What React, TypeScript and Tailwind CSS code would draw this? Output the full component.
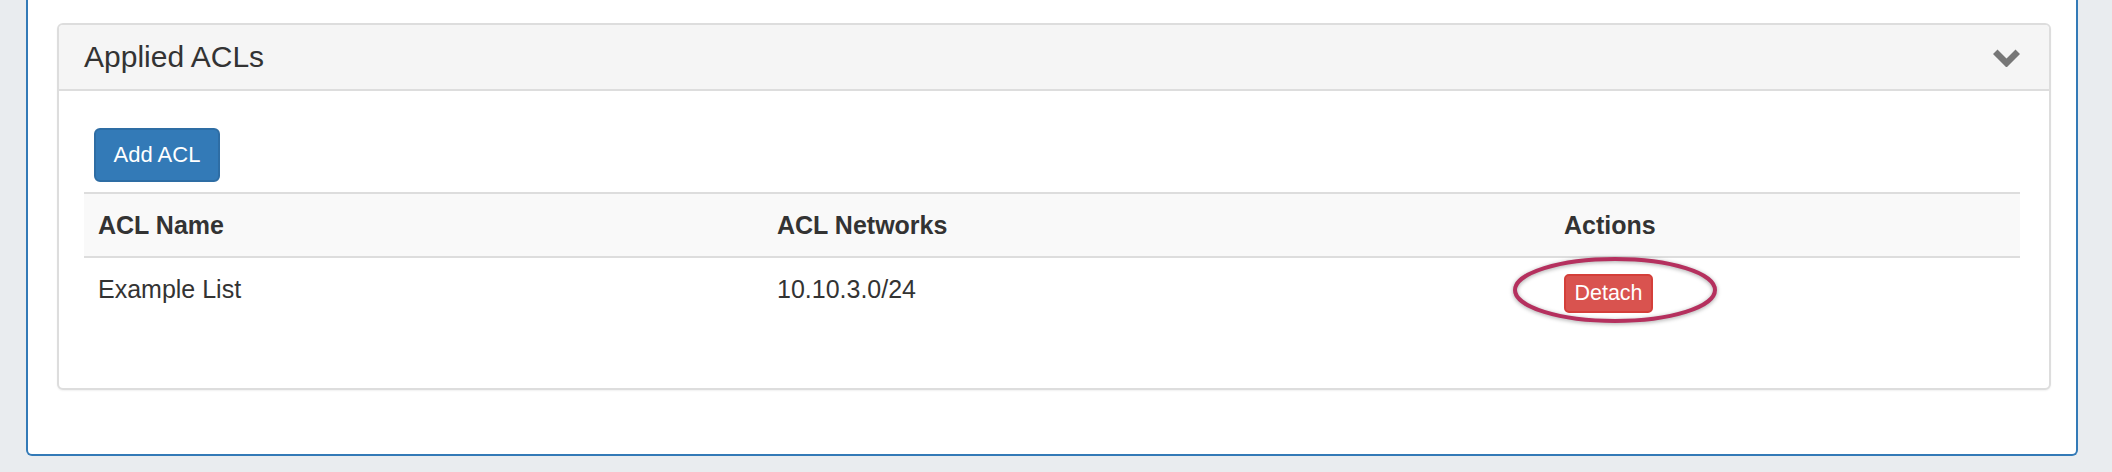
export default function App() {
  const font = { fontFamily: '"Liberation Sans", Arial, sans-serif' };

  return (
    <div className="w-[2112px] h-[472px] bg-[#e9ecef] overflow-hidden" style={font}>
      {/* Outer panel (top edge is cut off) */}
      <div className="ml-[26px] w-[2052px] h-[456px] bg-white border-x-2 border-b-2 border-[#337ab7] rounded-b-[6px] pt-[23px] pl-[29px]">
        {/* Applied ACLs panel */}
        <div className="w-[1994px] h-[367px] border-2 border-[#dddddd] rounded-[6px] bg-white shadow-[0_1px_2px_rgba(0,0,0,0.06)] overflow-hidden">
          <div className="h-[66px] bg-[#f5f5f5] border-b-2 border-[#dddddd] flex items-center justify-between pl-[25px] pr-[29px]">
            <h3 className="text-[30px] leading-none text-[#333333]">Applied ACLs</h3>
            <svg width="27" height="18" viewBox="0 0 27 18" className="mt-[1px]">
              <polygon points="0,5 4.5,0.5 13.5,9.5 22.5,0.5 27,5 13.5,18.5" fill="#777777" />
            </svg>
          </div>

          <div className="pl-[25px] pr-[29px] pt-[37px]">
            <button className="ml-[10px] w-[126px] h-[54px] bg-[#337ab7] border-2 border-[#2e6da4] rounded-[6px] text-white text-[22px] leading-none">
              Add ACL
            </button>

            <table className="mt-[10px] w-[1936px] table-fixed border-collapse text-[#333333] text-[25px] leading-[36px]">
              <colgroup>
                <col className="w-[679px]" />
                <col className="w-[787px]" />
                <col />
              </colgroup>
              <thead>
                <tr>
                  <th className="text-left font-bold bg-[#f9f9f9] border-t-2 border-b-2 border-[#dddddd] px-[14px] py-[13px]">
                    ACL Name
                  </th>
                  <th className="text-left font-bold bg-[#f9f9f9] border-t-2 border-b-2 border-[#dddddd] px-[14px] py-[13px]">
                    ACL Networks
                  </th>
                  <th className="text-left font-bold bg-[#f9f9f9] border-t-2 border-b-2 border-[#dddddd] px-[14px] py-[13px]">
                    Actions
                  </th>
                </tr>
              </thead>
              <tbody>
                <tr>
                  <td className="align-top px-[14px] pt-[13px]">Example List</td>
                  <td className="align-top px-[14px] pt-[13px]">10.10.3.0/24</td>
                  <td className="align-top px-[14px] pt-[15px]">
                    <div className="relative w-[89px]">
                      <button className="w-[89px] h-[39px] bg-[#d9534f] border-2 border-[#d43f3a] rounded-[5px] text-white text-[21.5px] leading-none">
                        Detach
                      </button>
                      {/* highlight ring */}
                      <svg
                        width="212"
                        height="74"
                        viewBox="0 0 212 74"
                        className="absolute left-[-55px] top-[-20px] pointer-events-none"
                        style={{ filter: "drop-shadow(0 1px 2px rgba(0,0,0,0.35))" }}
                      >
                        <ellipse cx="106" cy="37" rx="100" ry="31" fill="none" stroke="#b5305e" strokeWidth="4" />
                      </svg>
                    </div>
                  </td>
                </tr>
              </tbody>
            </table>
          </div>
        </div>
      </div>
    </div>
  );
}
